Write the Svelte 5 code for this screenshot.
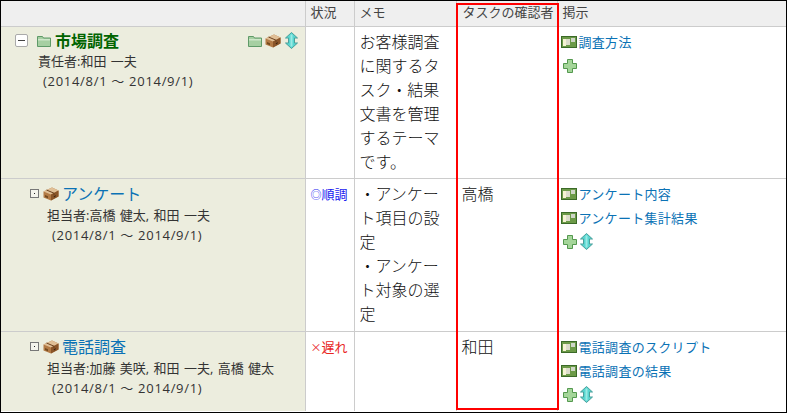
<script>
  const rows = [
    {
      cls: 'r1', indent: 'lvl0', title: '市場調査', root: true,
      who: '責任者:和田 一夫', mark: '', status: '', statusCls: '',
      memo: ['お客様調査', 'に関するタ', 'スク・結果', '文書を管理', 'するテーマ', 'です。'],
      confirm: '', links: ['調査方法'], move: false
    },
    {
      cls: 'r2', indent: 'lvl1', title: 'アンケート', root: false,
      who: '担当者:高橋 健太, 和田 一夫', mark: '◎', status: '順調', statusCls: 'ok',
      memo: ['・アンケー', 'ト項目の設', '定', '・アンケー', 'ト対象の選', '定'],
      confirm: '高橋', links: ['アンケート内容', 'アンケート集計結果'], move: true
    },
    {
      cls: 'r3', indent: 'lvl1', title: '電話調査', root: false,
      who: '担当者:加藤 美咲, 和田 一夫, 高橋 健太', mark: '×', status: '遅れ', statusCls: 'late',
      memo: [], confirm: '和田', links: ['電話調査のスクリプト', '電話調査の結果'], move: true
    }
  ];
</script>

{#snippet folder()}
  <svg class="ic folder" width="14" height="12" viewBox="0 0 14 12">
    <path d="M.5 1.500h5l1 1.500h7v8.500h-13z" fill="#a6cfa2" stroke="#5f9a68"/>
    <path d="M1 4h12v1.500H1z" fill="#cfe7ca"/>
  </svg>
{/snippet}

{#snippet box()}
  <svg class="ic" width="16" height="14" viewBox="0 0 16 14">
    <path d="M.5 4.500l8.500-4 6.500 3v6l-7.500 4-7.500-3z" fill="#b27a45"/>
    <path d="M.5 4.500l7.500 3 7.500-4-6.500-3z" fill="#e0bf96"/>
    <path d="M8 7.500v6l7.500-4v-6z" fill="#8a5529"/>
    <path d="M3.500 3l7.500 3.200v2" fill="none" stroke="#6b4220" stroke-width="1"/>
    <path d="M10.500 9.500l2.500-1.500-1 2.500z" fill="#3c2410"/>
    <path d="M2 8l3 1.200v2L2 10z" fill="#74491f"/>
  </svg>
{/snippet}

{#snippet move()}
  <svg class="ic" width="13" height="17" viewBox="0 0 13 17">
    <path d="M6.500.5l6 5.500H9.500v5h3l-6 5.500-6-5.500h3V6h-3z" fill="#57d6d0" stroke="#4b9f9b"/>
    <path d="M6.500 2.500v12" stroke="#9beae5" stroke-width="2"/>
  </svg>
{/snippet}

{#snippet plus()}
  <svg class="ic" width="14" height="14" viewBox="0 0 14 14">
    <path d="M4.500.5h5v4h4v5h-4v4h-5v-4h-4v-5h4z" fill="#a5d69a" stroke="#55994f"/>
  </svg>
{/snippet}

{#snippet board()}
  <svg class="ic board" width="16" height="12" viewBox="0 0 16 12">
    <rect x=".5" y=".5" width="15" height="11" fill="#6c9a48" stroke="#3b6a28"/>
    <rect x="2" y="3" width="3" height="7" fill="#f5f3d4"/>
    <rect x="5" y="3" width="4" height="6" fill="#dcdccb"/>
    <rect x="10" y="2" width="4" height="4" fill="#cfd6c8"/>
  </svg>
{/snippet}

<div class="frame">
  <table>
    <colgroup>
      <col class="c-task" /><col class="c-status" /><col class="c-memo" /><col class="c-confirm" /><col />
    </colgroup>
    <thead>
      <tr>
        <th></th><th>状況</th><th>メモ</th><th>タスクの確認者</th><th>掲示</th>
      </tr>
    </thead>
    <tbody>
      {#each rows as row}
        <tr class={row.cls}>
          <td class="task">
            <div class="head {row.indent}">
              {#if row.root}
                <span class="toggle big"><span class="dash"></span></span>
                {@render folder()}
                <a class="title root">{row.title}</a>
                <span class="tools">{@render folder()}{@render box()}{@render move()}</span>
              {:else}
                <span class="toggle small"><span class="dot"></span></span>
                {@render box()}
                <a class="title">{row.title}</a>
              {/if}
            </div>
            <div class="meta {row.indent}">
              <div class="who">{row.who}</div>
              <div class="date">(2014/8/1 ～ 2014/9/1)</div>
            </div>
          </td>
          <td class="status {row.statusCls}"><span class="smark">{row.mark}</span>{row.status}</td>
          <td class="memo">
            {#each row.memo as line}<div>{line}</div>{/each}
          </td>
          <td class="confirm">{row.confirm}</td>
          <td class="links">
            {#each row.links as l}
              <div class="link">{@render board()}<a>{l}</a></div>
            {/each}
            <div class="actions">{@render plus()}{#if row.move}{@render move()}{/if}</div>
          </td>
        </tr>
      {/each}
    </tbody>
  </table>
  <div class="mark"></div>
</div>

<style>
  :global(body) {
    margin: 0;
    background: #fff;
  }
  .frame {
    position: relative;
    box-sizing: border-box;
    width: 787px;
    height: 413px;
    border: 1px solid #000;
    font-family: "Open Sans", "Noto Sans CJK JP", sans-serif;
    color: #333;
    overflow: hidden;
  }
  table {
    border-collapse: collapse;
    table-layout: fixed;
    width: 785px;
  }
  .c-task { width: 304px; }
  .c-status { width: 49px; }
  .c-memo { width: 102px; }
  .c-confirm { width: 101px; }
  th {
    box-sizing: border-box;
    height: 25px;
    padding: 0 0 4px 5px;
    background: #efefef;
    border-right: 1px solid #ccc;
    border-bottom: 1px solid #ccc;
    font-size: 13px;
    font-weight: 400;
    text-align: left;
    color: #444;
    white-space: nowrap;
  }
  th:nth-child(4) { padding-left: 6px; }
  td {
    box-sizing: border-box;
    vertical-align: top;
    padding: 0;
    border-right: 1px solid #ccc;
    border-bottom: 1px solid #ccc;
  }
  th:last-child, td:last-child { border-right: 0; }
  tbody tr:last-child td { border-bottom: 0; }
  .r1 td { height: 152px; }
  .r2 td { height: 153px; }
  .r3 td { height: 80px; }
  .task { background: #ecedde; }
  .head {
    display: flex;
    align-items: center;
    height: 20px;
    margin-top: 4px;
  }
  .r1 .head { padding-left: 14px; padding-right: 7px; }
  .lvl1.head { padding-left: 29px; margin-top: 5px; }
  .toggle {
    box-sizing: border-box;
    display: flex;
    align-items: center;
    justify-content: center;
    background: #fff;
    flex: none;
  }
  .big {
    width: 13px;
    height: 13px;
    border: 1px solid #aaa;
    border-radius: 2px;
    margin-right: 9px;
  }
  .dash { width: 7px; height: 1px; background: #444; }
  .small {
    width: 9px;
    height: 9px;
    border: 1px solid #777;
    margin-right: 4px;
    background: #f4f4ec;
  }
  .dot { width: 1px; height: 1px; background: #222; }
  .ic { display: block; flex: none; }
  .folder { margin-right: 4px; }
  .title {
    font-size: 16px;
    line-height: 20px;
    color: #0b72b5;
    margin-left: 3px;
  }
  .title.root {
    color: #006400;
    font-weight: 700;
    margin-left: 0;
  }
  .tools {
    display: flex;
    align-items: center;
    margin-left: auto;
    gap: 4px;
  }
  .tools :global(.folder) { margin-right: -1px; }
  .meta {
    font-size: 13px;
    line-height: 20px;
    margin-top: 0;
    color: #333;
    padding-left: 37px;
  }
  .lvl1.meta { padding-left: 46px; margin-top: 1px; }
  .who { word-spacing: 1px; }
  .date { padding-left: 5px; letter-spacing: .7px; }
  .status {
    font-size: 13px;
    padding: 5px 0 0 5px;
    line-height: 20px;
    white-space: nowrap;
  }
  .smark { font-size: 11px; font-family: "Noto Sans CJK JP", sans-serif; }
  .ok { color: #1a1af0; }
  .late { color: #e8251e; }
  .memo, .confirm {
    font-size: 16px;
    font-weight: 300;
    line-height: 24px;
    padding: 3px 0 0 5px;
    color: #111;
  }
  .memo div { white-space: nowrap; }
  .links { padding: 3px 0 0 3px; }
  .link {
    display: flex;
    align-items: center;
    height: 24px;
    font-size: 13px;
    letter-spacing: .3px;
    color: #0b72b5;
  }
  .board { margin-right: 2px; }
  .actions {
    display: flex;
    align-items: center;
    gap: 3px;
    height: 24px;
    padding-left: 2px;
  }
  .mark {
    position: absolute;
    box-sizing: border-box;
    left: 455px;
    top: 2px;
    width: 103px;
    height: 407px;
    border: 2px solid #f00;
    pointer-events: none;
  }
</style>
